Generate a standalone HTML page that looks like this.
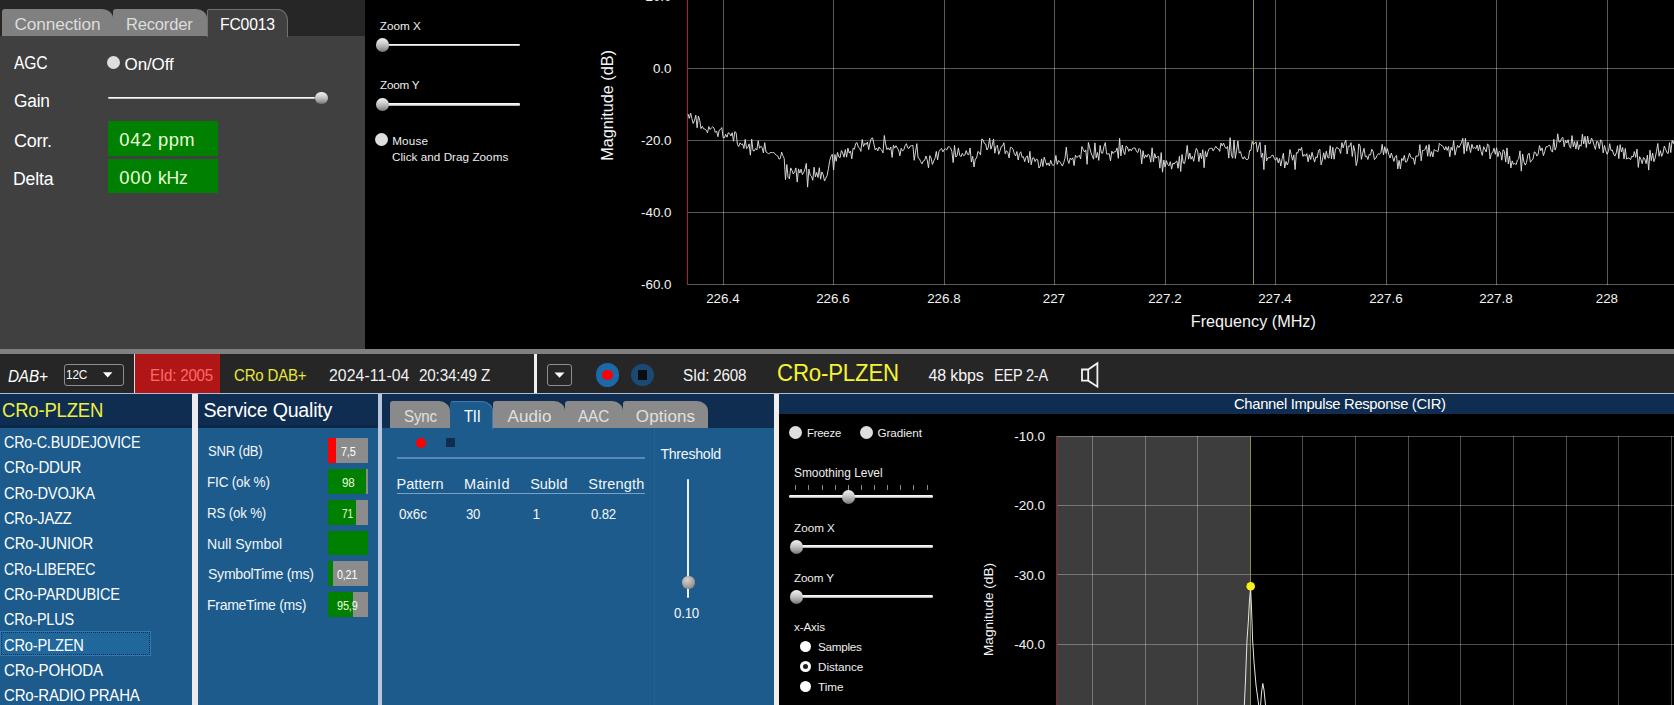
<!DOCTYPE html>
<html lang="en"><head><meta charset="utf-8"><title>DAB+ receiver</title>
<style>
html,body{margin:0;padding:0;background:#000;}
body{width:1674px;height:705px;position:relative;overflow:hidden;font-family:"Liberation Sans", sans-serif;}
.a,.t,.bar,.knob,.radio,.hl,.tab{position:absolute;}
.t{white-space:pre;display:block;transform-origin:0 0;}
.tab{background:#808080;top:9px;height:27px;border-radius:3px 11px 0 0/3px 9px 0 0;}
.tab.on{background:#404040;border:1px solid #727272;border-bottom:none;box-sizing:border-box;height:28px;border-radius:2px 10px 0 0/2px 11px 0 0;}
.tab2{position:absolute;background:#8a8a8a;top:401px;height:27px;border-radius:3px 11px 0 0/3px 10px 0 0;}
.tab2.on{background:#1c5b8b;box-sizing:border-box;border:1px solid #3c7cb2;border-bottom:none;border-left-color:#1c5b8b;}
.knob{width:13.2px;height:13.8px;border-radius:50%;background:linear-gradient(#f0f0f0 0%,#d2d2d2 35%,#a2a2a2 72%,#707070 100%);margin-left:0.4px;}
.radio{width:13px;height:13px;border-radius:50%;background:#dedede;}
.hl{height:2.4px;margin-top:0.4px;border-radius:1.2px;background:linear-gradient(#ffffff 0%,#f0f0f0 45%,#9c9c9c 100%);}
.bar{left:328px;width:39.9px;height:24.8px;background:#8c8c8c;}
.bar b{display:block;height:24.8px;}
.ticks i{position:absolute;top:485px;width:1px;height:5px;background:#8a8a8a;}
svg{position:absolute;left:0;top:0;}
svg text{font-family:"Liberation Sans", sans-serif;}
</style></head><body>
<!-- ===== top-left control panel ===== -->
<div class="a" style="left:0;top:0;width:365px;height:36px;background:#262626"></div>
<div class="a" style="left:0;top:36px;width:365px;height:313px;background:#404040"></div>
<div class="tab" style="left:1.5px;width:111px"></div>
<div class="tab" style="left:113px;width:94px"></div>
<div class="tab on" style="left:207px;width:81px"></div>
<div class="radio" style="left:107.3px;top:55.5px"></div>
<div class="hl" style="left:108px;top:96.3px;width:207px;height:2.4px"></div>
<div class="knob" style="left:314.8px;top:91.5px;width:12.4px;height:12.4px"></div>
<div class="a" style="left:107.8px;top:121px;width:110.2px;height:34.6px;background:#008000"></div>
<div class="a" style="left:107.8px;top:159.3px;width:110.2px;height:34px;background:#008000"></div>
<!-- zoom controls -->
<div class="hl" style="left:383px;top:43.2px;width:136.5px"></div>
<div class="knob" style="left:375.3px;top:38px"></div>
<div class="hl" style="left:383px;top:102.9px;width:136.5px"></div>
<div class="knob" style="left:375.3px;top:97.6px"></div>
<div class="radio" style="left:374.7px;top:133px"></div>
<!-- ===== divider + status bar ===== -->
<div class="a" style="left:0;top:349px;width:1674px;height:5px;background:#808080"></div>
<div class="a" style="left:0;top:354px;width:1674px;height:39px;background:#262626"></div>
<div class="a" style="left:0;top:393px;width:1674px;height:1px;background:#a9bdd6"></div>
<div class="a" style="left:64px;top:364px;width:59.7px;height:22px;box-sizing:border-box;border:1px solid #8e8e8e;border-radius:3px"></div>
<div class="a" style="left:133.5px;top:354px;width:1.5px;height:39px;background:#e0e0e0"></div>
<div class="a" style="left:135px;top:354px;width:84.7px;height:39px;background:#b01616"></div>
<div class="a" style="left:534px;top:354px;width:3px;height:39px;background:#f0f0f0"></div>
<div class="a" style="left:547.3px;top:364px;width:24.8px;height:22px;box-sizing:border-box;border:1px solid #8e8e8e;border-radius:3px"></div>
<div class="a" style="left:595.7px;top:363.2px;width:23.6px;height:23.6px;border-radius:50%;background:#1b69a6"></div>
<div class="a" style="left:602px;top:369.7px;width:10.6px;height:10.6px;border-radius:50%;background:#ff0000"></div>
<div class="a" style="left:631px;top:363.7px;width:22.6px;height:22.6px;border-radius:50%;background:#1a4a74"></div>
<div class="a" style="left:637.6px;top:370px;width:9.4px;height:10px;background:#0c0c0c"></div>
<!-- ===== bottom panels ===== -->
<div class="a" style="left:0;top:394px;width:192px;height:34px;background:#0f2d50"></div>
<div class="a" style="left:0;top:428px;width:192px;height:277px;background:#1c5b8b"></div>
<div class="a" style="left:0;top:425px;width:192px;height:3px;background:#0c2846"></div>
<div class="a" style="left:0;top:631.3px;width:150.5px;height:25px;box-sizing:border-box;background:#20689c;border:1px solid #3079b3"></div>
<div class="a" style="left:1px;top:632.3px;width:148.5px;height:23px;box-sizing:border-box;border:1px dotted #0f2d50"></div>
<div class="a" style="left:192.2px;top:394px;width:6px;height:311px;background:#ece9ef"></div>
<div class="a" style="left:198px;top:394px;width:180.3px;height:34px;background:#0f2d50"></div>
<div class="a" style="left:198px;top:428px;width:180.3px;height:277px;background:#1c5b8b"></div>
<div class="a" style="left:198px;top:425px;width:180.3px;height:3px;background:#0c2846"></div>
<div class="bar" style="top:438.2px"><b style="width:8px;background:#ff0000"></b></div><div class="bar" style="top:469.0px"><b style="width:38.4px;background:#008000"></b></div><div class="bar" style="top:499.8px"><b style="width:28px;background:#008000"></b></div><div class="bar" style="top:530.6px"><b style="width:40px;background:#008000"></b></div><div class="bar" style="top:561.4px"><b style="width:5px;background:#008000"></b></div><div class="bar" style="top:592.2px"><b style="width:25.2px;background:#008000"></b></div>
<div class="a" style="left:378.3px;top:394px;width:3.9px;height:311px;background:#b9c6dd"></div>
<div class="a" style="left:382.2px;top:394px;width:391.8px;height:34px;background:#0f2d50"></div>
<div class="a" style="left:382.2px;top:428px;width:391.8px;height:277px;background:#1c5b8b"></div>
<div class="tab2" style="left:390px;width:59.5px"></div>
<div class="tab2" style="left:493px;width:71.5px"></div>
<div class="tab2" style="left:564.5px;width:58.5px"></div>
<div class="tab2" style="left:622.5px;width:85.7px"></div>
<div class="tab2 on" style="left:450px;width:42.5px;height:28px"></div>
<div class="a" style="left:416.3px;top:438px;width:10px;height:10px;border-radius:50%;background:#ff0000"></div>
<div class="a" style="left:446px;top:438.2px;width:8.8px;height:9.3px;background:#0f2d50"></div>
<div class="a" style="left:397px;top:457.4px;width:247.6px;height:1.8px;background:#5a88b4"></div>
<div class="a" style="left:397px;top:493px;width:247.6px;height:1px;background:#7c9fc4"></div>
<div class="a" style="left:654px;top:428px;width:1px;height:277px;background:#24628f"></div>
<div class="a" style="left:686.6px;top:478.8px;width:2.6px;height:119.4px;border-radius:1.3px;background:#e8f0fa"></div>
<div class="knob" style="left:681.8px;top:576.3px;width:12.4px;height:12.4px;background:radial-gradient(circle at 40% 30%,#d8d0cc 0%,#aaa4a0 50%,#70706c 100%)"></div>
<div class="a" style="left:774px;top:394px;width:5px;height:311px;background:#f1eeee"></div>
<div class="a" style="left:779px;top:394px;width:895px;height:20px;background:#0f2d50"></div>
<!-- CIR controls -->
<div class="radio" style="left:789px;top:425.5px"></div>
<div class="radio" style="left:860.3px;top:425.5px"></div>
<div class="ticks"><i style="left:795.3px"></i><i style="left:808.4px"></i><i style="left:821.5px"></i><i style="left:834.7px"></i><i style="left:847.8px"></i><i style="left:860.9px"></i><i style="left:874.0px"></i><i style="left:887.1px"></i><i style="left:900.3px"></i><i style="left:913.4px"></i><i style="left:926.5px"></i></div>
<div class="hl" style="left:789.3px;top:495px;width:144px"></div>
<div class="knob" style="left:841.9px;top:490px"></div>
<div class="hl" style="left:796px;top:545.1px;width:137.4px"></div>
<div class="knob" style="left:789.5px;top:540.1px"></div>
<div class="hl" style="left:796px;top:594.8px;width:137.4px"></div>
<div class="knob" style="left:789.5px;top:589.8px"></div>
<div class="a" style="left:800.3px;top:641.2px;width:11px;height:11px;border-radius:50%;background:#fff"></div>
<div class="a" style="left:800.3px;top:661.1px;width:11px;height:11px;border-radius:50%;background:#fff"></div>
<div class="a" style="left:803.2px;top:664px;width:5.2px;height:5.2px;border-radius:50%;background:#1e1e1e"></div>
<div class="a" style="left:800.3px;top:681.2px;width:11px;height:11px;border-radius:50%;background:#fff"></div>
<!-- ===== charts + icons (svg) ===== -->
<svg width="1674" height="705" viewBox="0 0 1674 705">
 <g stroke="#fff" stroke-opacity="0.35" stroke-width="1" shape-rendering="crispEdges"><line x1="723.5" y1="0" x2="723.5" y2="284.5"/><line x1="833.5" y1="0" x2="833.5" y2="284.5"/><line x1="944.5" y1="0" x2="944.5" y2="284.5"/><line x1="1054.5" y1="0" x2="1054.5" y2="284.5"/><line x1="1165.5" y1="0" x2="1165.5" y2="284.5"/><line x1="1275.5" y1="0" x2="1275.5" y2="284.5"/><line x1="1386.5" y1="0" x2="1386.5" y2="284.5"/><line x1="1496.5" y1="0" x2="1496.5" y2="284.5"/><line x1="1607.5" y1="0" x2="1607.5" y2="284.5"/><line x1="688" y1="68.5" x2="1674" y2="68.5"/><line x1="688" y1="140.5" x2="1674" y2="140.5"/><line x1="688" y1="212.5" x2="1674" y2="212.5"/><line x1="688" y1="284.5" x2="1674" y2="284.5"/></g>
 <line x1="687.45" y1="0" x2="687.45" y2="285" stroke="#8e3030" stroke-width="1.2"/>
 <line x1="1253.5" y1="0" x2="1253.5" y2="285" stroke="#8e8e3a" stroke-width="1" shape-rendering="crispEdges"/>
 <polyline points="688.0,114.0 689.3,118.4 690.6,113.0 691.9,118.6 693.2,123.5 694.5,120.5 695.8,115.2 697.1,127.8 698.4,116.1 699.7,120.2 701.0,128.6 702.3,126.3 703.6,128.9 704.9,129.0 706.2,130.1 707.5,132.8 708.8,126.6 710.1,129.5 711.4,127.9 712.7,126.8 714.0,128.1 715.3,132.4 716.6,131.0 717.9,136.7 719.2,130.2 720.5,129.5 721.8,127.6 723.1,137.6 724.4,137.9 725.7,134.3 727.0,137.2 728.3,132.7 729.6,133.4 730.9,136.0 732.2,132.7 733.5,141.2 734.8,131.7 736.1,132.7 737.4,144.3 738.7,146.6 740.0,142.9 741.3,144.5 742.6,143.9 743.9,148.5 745.2,139.4 746.5,148.6 747.8,147.5 749.1,143.9 750.4,155.2 751.7,139.1 753.0,150.7 754.3,150.9 755.6,148.5 756.9,149.9 758.2,140.7 759.5,148.3 760.8,146.3 762.1,147.5 763.4,153.0 764.7,142.7 766.0,152.0 767.3,152.6 768.6,154.1 769.9,152.7 771.2,152.4 772.5,152.8 773.8,152.4 775.1,154.1 776.4,155.2 777.7,155.9 779.0,159.1 780.3,158.5 781.6,152.0 782.9,155.8 784.2,158.4 785.5,179.6 786.8,164.5 788.1,177.4 789.4,178.8 790.7,167.9 792.0,170.5 793.3,174.0 794.6,172.0 795.9,167.9 797.2,182.1 798.5,168.9 799.8,173.0 801.1,169.1 802.4,174.6 803.7,172.5 805.0,169.0 806.3,163.4 807.6,187.1 808.9,169.1 810.2,175.1 811.5,176.3 812.8,180.3 814.1,167.2 815.4,176.8 816.7,172.5 818.0,177.5 819.3,167.7 820.6,179.2 821.9,171.9 823.2,174.6 824.5,181.0 825.8,178.2 827.1,175.6 828.4,168.8 829.7,160.7 831.0,156.3 832.3,154.4 833.6,170.0 834.9,154.5 836.2,161.2 837.5,152.4 838.8,156.9 840.1,157.7 841.4,150.5 842.7,152.9 844.0,157.2 845.3,149.6 846.6,157.2 847.9,148.1 849.2,153.1 850.5,151.1 851.8,158.8 853.1,148.3 854.4,149.2 855.7,143.5 857.0,142.6 858.3,147.0 859.6,148.3 860.9,151.4 862.2,139.5 863.5,146.5 864.8,143.3 866.1,144.5 867.4,142.1 868.7,149.6 870.0,142.9 871.3,138.3 872.6,137.9 873.9,144.1 875.2,149.9 876.5,148.1 877.8,151.0 879.1,147.0 880.4,148.9 881.7,150.1 883.0,152.9 884.3,135.5 885.6,143.9 886.9,149.6 888.2,147.8 889.5,150.1 890.8,147.0 892.1,157.4 893.4,145.3 894.7,148.1 896.0,145.7 897.3,148.1 898.6,150.0 899.9,155.8 901.2,148.3 902.5,151.1 903.8,149.8 905.1,145.7 906.4,143.7 907.7,147.9 909.0,148.4 910.3,145.9 911.6,145.8 912.9,145.4 914.2,160.3 915.5,152.2 916.8,143.7 918.1,157.8 919.4,158.7 920.7,161.7 922.0,163.9 923.3,160.9 924.6,160.4 925.9,156.0 927.2,159.9 928.5,167.8 929.8,155.6 931.1,158.0 932.4,164.5 933.7,161.0 935.0,158.4 936.3,151.5 937.6,159.9 938.9,151.7 940.2,149.7 941.5,148.3 942.8,151.9 944.1,149.6 945.4,148.9 946.7,150.0 948.0,146.9 949.3,146.8 950.6,148.0 951.9,151.6 953.2,162.6 954.5,145.5 955.8,157.1 957.1,155.7 958.4,147.9 959.7,155.2 961.0,156.7 962.3,153.4 963.6,155.6 964.9,154.9 966.2,150.6 967.5,154.2 968.8,154.8 970.1,148.0 971.4,162.1 972.7,156.3 974.0,167.0 975.3,158.9 976.6,158.2 977.9,151.5 979.2,152.4 980.5,154.9 981.8,139.0 983.1,139.8 984.4,143.6 985.7,144.0 987.0,150.0 988.3,147.3 989.6,138.1 990.9,149.2 992.2,145.2 993.5,139.0 994.8,153.2 996.1,146.5 997.4,145.2 998.7,154.4 1000.0,150.8 1001.3,146.4 1002.6,145.9 1003.9,142.8 1005.2,153.8 1006.5,150.8 1007.8,152.5 1009.1,157.9 1010.4,147.4 1011.7,147.6 1013.0,149.1 1014.3,153.7 1015.6,155.9 1016.9,151.5 1018.2,160.0 1019.5,153.8 1020.8,151.8 1022.1,157.3 1023.4,156.7 1024.7,161.7 1026.0,157.3 1027.3,155.8 1028.6,162.8 1029.9,151.3 1031.2,164.7 1032.5,158.1 1033.8,157.8 1035.1,161.6 1036.4,159.0 1037.7,159.8 1039.0,168.0 1040.3,166.0 1041.6,158.8 1042.9,166.5 1044.2,157.2 1045.5,161.4 1046.8,165.2 1048.1,162.9 1049.4,165.9 1050.7,160.3 1052.0,164.5 1053.3,165.7 1054.6,163.6 1055.9,155.4 1057.2,164.4 1058.5,160.6 1059.8,161.6 1061.1,163.9 1062.4,166.1 1063.7,162.7 1065.0,158.3 1066.3,147.1 1067.6,159.9 1068.9,163.5 1070.2,158.0 1071.5,159.7 1072.8,157.8 1074.1,165.6 1075.4,155.1 1076.7,157.4 1078.0,156.7 1079.3,155.2 1080.6,158.9 1081.9,146.5 1083.2,149.5 1084.5,152.0 1085.8,149.9 1087.1,164.3 1088.4,142.5 1089.7,147.5 1091.0,152.9 1092.3,156.1 1093.6,159.2 1094.9,142.9 1096.2,157.9 1097.5,152.5 1098.8,160.4 1100.1,145.4 1101.4,153.0 1102.7,153.2 1104.0,146.3 1105.3,142.6 1106.6,153.9 1107.9,154.0 1109.2,153.7 1110.5,160.8 1111.8,151.1 1113.1,153.5 1114.4,151.7 1115.7,151.7 1117.0,147.9 1118.3,158.3 1119.6,138.3 1120.9,155.9 1122.2,145.1 1123.5,151.4 1124.8,154.5 1126.1,146.0 1127.4,147.0 1128.7,151.3 1130.0,148.9 1131.3,150.9 1132.6,148.4 1133.9,147.9 1135.2,148.1 1136.5,151.5 1137.8,152.6 1139.1,148.4 1140.4,149.7 1141.7,163.9 1143.0,150.7 1144.3,158.3 1145.6,154.9 1146.9,157.1 1148.2,154.2 1149.5,155.6 1150.8,162.2 1152.1,147.8 1153.4,161.7 1154.7,153.6 1156.0,158.2 1157.3,156.8 1158.6,156.4 1159.9,168.2 1161.2,152.6 1162.5,172.2 1163.8,160.1 1165.1,167.1 1166.4,160.6 1167.7,164.5 1169.0,165.8 1170.3,161.7 1171.6,169.1 1172.9,163.1 1174.2,164.1 1175.5,162.0 1176.8,161.0 1178.1,168.3 1179.4,156.3 1180.7,171.5 1182.0,154.5 1183.3,163.1 1184.6,163.4 1185.9,156.1 1187.2,145.4 1188.5,159.2 1189.8,153.0 1191.1,159.2 1192.4,156.3 1193.7,161.3 1195.0,153.5 1196.3,148.4 1197.6,150.8 1198.9,161.6 1200.2,153.0 1201.5,158.6 1202.8,149.7 1204.1,167.7 1205.4,151.4 1206.7,157.0 1208.0,151.6 1209.3,148.6 1210.6,148.4 1211.9,148.0 1213.2,150.9 1214.5,148.6 1215.8,146.3 1217.1,148.3 1218.4,148.9 1219.7,151.4 1221.0,143.0 1222.3,146.0 1223.6,143.1 1224.9,146.9 1226.2,148.6 1227.5,146.4 1228.8,158.1 1230.1,137.7 1231.4,155.2 1232.7,158.2 1234.0,140.0 1235.3,158.4 1236.6,150.4 1237.9,140.9 1239.2,153.2 1240.5,151.6 1241.8,156.6 1243.1,159.1 1244.4,156.6 1245.7,159.1 1247.0,159.6 1248.3,158.9 1249.6,150.5 1250.9,150.4 1252.2,141.4 1253.5,144.5 1254.8,143.3 1256.1,141.9 1257.4,152.1 1258.7,146.1 1260.0,142.3 1261.3,157.4 1262.6,153.0 1263.9,169.6 1265.2,145.0 1266.5,161.0 1267.8,158.0 1269.1,157.6 1270.4,157.6 1271.7,155.5 1273.0,155.2 1274.3,158.4 1275.6,160.3 1276.9,157.5 1278.2,162.8 1279.5,158.5 1280.8,166.1 1282.1,158.8 1283.4,153.3 1284.7,168.0 1286.0,161.5 1287.3,164.9 1288.6,161.4 1289.9,149.5 1291.2,154.4 1292.5,160.2 1293.8,154.9 1295.1,169.6 1296.4,152.7 1297.7,153.1 1299.0,148.8 1300.3,150.5 1301.6,147.4 1302.9,156.4 1304.2,154.4 1305.5,156.2 1306.8,153.6 1308.1,161.8 1309.4,154.7 1310.7,159.5 1312.0,152.3 1313.3,157.4 1314.6,162.1 1315.9,156.8 1317.2,157.8 1318.5,150.7 1319.8,149.1 1321.1,164.8 1322.4,159.9 1323.7,152.8 1325.0,159.4 1326.3,151.2 1327.6,157.3 1328.9,158.0 1330.2,145.6 1331.5,158.8 1332.8,147.3 1334.1,159.2 1335.4,149.9 1336.7,147.3 1338.0,148.3 1339.3,149.1 1340.6,153.5 1341.9,142.6 1343.2,147.9 1344.5,143.2 1345.8,140.0 1347.1,154.0 1348.4,146.0 1349.7,146.4 1351.0,142.7 1352.3,156.5 1353.6,145.6 1354.9,151.5 1356.2,165.6 1357.5,159.9 1358.8,143.9 1360.1,146.0 1361.4,159.4 1362.7,153.2 1364.0,148.3 1365.3,156.7 1366.6,156.1 1367.9,159.5 1369.2,154.5 1370.5,154.9 1371.8,149.3 1373.1,151.5 1374.4,159.6 1375.7,158.3 1377.0,155.6 1378.3,153.8 1379.6,154.2 1380.9,152.6 1382.2,144.3 1383.5,154.8 1384.8,146.7 1386.1,153.4 1387.4,148.6 1388.7,154.2 1390.0,158.0 1391.3,153.0 1392.6,157.1 1393.9,161.4 1395.2,156.7 1396.5,155.4 1397.8,168.9 1399.1,160.4 1400.4,168.9 1401.7,158.4 1403.0,160.6 1404.3,155.4 1405.6,162.1 1406.9,161.7 1408.2,157.7 1409.5,153.2 1410.8,157.2 1412.1,158.3 1413.4,158.1 1414.7,164.4 1416.0,155.9 1417.3,156.2 1418.6,155.7 1419.9,144.6 1421.2,160.8 1422.5,150.4 1423.8,150.4 1425.1,149.4 1426.4,145.6 1427.7,156.2 1429.0,144.5 1430.3,156.5 1431.6,151.6 1432.9,156.9 1434.2,149.4 1435.5,150.8 1436.8,150.9 1438.1,151.5 1439.4,143.4 1440.7,144.7 1442.0,145.8 1443.3,146.7 1444.6,150.0 1445.9,146.6 1447.2,150.4 1448.5,146.5 1449.8,156.7 1451.1,147.2 1452.4,150.4 1453.7,140.7 1455.0,155.1 1456.3,149.5 1457.6,145.4 1458.9,147.5 1460.2,145.4 1461.5,142.4 1462.8,138.3 1464.1,153.8 1465.4,138.3 1466.7,151.2 1468.0,142.1 1469.3,147.0 1470.6,152.5 1471.9,144.3 1473.2,148.5 1474.5,147.3 1475.8,148.8 1477.1,145.1 1478.4,150.9 1479.7,144.8 1481.0,151.3 1482.3,155.4 1483.6,146.7 1484.9,149.2 1486.2,152.0 1487.5,144.0 1488.8,145.2 1490.1,159.0 1491.4,153.2 1492.7,152.5 1494.0,148.2 1495.3,154.3 1496.6,147.8 1497.9,156.8 1499.2,151.3 1500.5,152.6 1501.8,160.2 1503.1,149.7 1504.4,151.4 1505.7,162.1 1507.0,147.9 1508.3,163.8 1509.6,156.1 1510.9,167.9 1512.2,160.9 1513.5,164.3 1514.8,163.4 1516.1,164.7 1517.4,160.1 1518.7,158.9 1520.0,150.9 1521.3,171.1 1522.6,154.0 1523.9,161.8 1525.2,165.1 1526.5,162.6 1527.8,155.0 1529.1,153.2 1530.4,162.2 1531.7,160.3 1533.0,159.2 1534.3,151.9 1535.6,152.6 1536.9,156.1 1538.2,154.0 1539.5,145.6 1540.8,150.7 1542.1,147.9 1543.4,155.6 1544.7,151.7 1546.0,146.7 1547.3,147.0 1548.6,145.4 1549.9,145.3 1551.2,150.7 1552.5,152.1 1553.8,139.4 1555.1,150.1 1556.4,146.5 1557.7,133.8 1559.0,142.0 1560.3,141.8 1561.6,138.3 1562.9,137.4 1564.2,146.8 1565.5,140.3 1566.8,143.0 1568.1,139.7 1569.4,146.2 1570.7,148.2 1572.0,135.6 1573.3,146.8 1574.6,141.7 1575.9,149.1 1577.2,141.3 1578.5,149.6 1579.8,144.8 1581.1,146.2 1582.4,134.2 1583.7,144.0 1585.0,136.3 1586.3,147.6 1587.6,136.1 1588.9,143.8 1590.2,143.5 1591.5,138.0 1592.8,140.8 1594.1,145.4 1595.4,149.4 1596.7,141.4 1598.0,141.9 1599.3,148.7 1600.6,139.9 1601.9,141.1 1603.2,152.9 1604.5,145.5 1605.8,150.6 1607.1,154.3 1608.4,151.5 1609.7,143.7 1611.0,150.5 1612.3,150.0 1613.6,154.0 1614.9,156.1 1616.2,153.0 1617.5,145.7 1618.8,158.6 1620.1,144.7 1621.4,151.9 1622.7,147.5 1624.0,159.0 1625.3,148.5 1626.6,159.2 1627.9,157.9 1629.2,158.2 1630.5,159.7 1631.8,156.2 1633.1,157.0 1634.4,151.6 1635.7,157.4 1637.0,149.1 1638.3,167.4 1639.6,156.7 1640.9,159.5 1642.2,163.6 1643.5,157.4 1644.8,159.2 1646.1,163.7 1647.4,155.1 1648.7,170.1 1650.0,150.2 1651.3,160.7 1652.6,153.0 1653.9,161.7 1655.2,157.9 1656.5,151.4 1657.8,143.5 1659.1,156.3 1660.4,150.6 1661.7,156.4 1663.0,153.0 1664.3,146.0 1665.6,149.3 1666.9,152.7 1668.2,153.5 1669.5,142.6 1670.8,152.6 1672.1,140.3 1673.4,143.6 1674.7,138.4" fill="none" stroke="#dedede" stroke-width="0.95" stroke-linejoin="round"/>
 <g fill="#f2f2f2" font-size="13.4"><text x="722.9" y="303" text-anchor="middle">226.4</text><text x="832.9" y="303" text-anchor="middle">226.6</text><text x="943.9" y="303" text-anchor="middle">226.8</text><text x="1053.9" y="303" text-anchor="middle">227</text><text x="1164.9" y="303" text-anchor="middle">227.2</text><text x="1274.9" y="303" text-anchor="middle">227.4</text><text x="1385.9" y="303" text-anchor="middle">227.6</text><text x="1495.9" y="303" text-anchor="middle">227.8</text><text x="1606.9" y="303" text-anchor="middle">228</text><text x="671.5" y="1.4" text-anchor="end">20.0</text><text x="671.5" y="73.4" text-anchor="end">0.0</text><text x="671.5" y="145.4" text-anchor="end">-20.0</text><text x="671.5" y="217.4" text-anchor="end">-40.0</text><text x="671.5" y="289.3" text-anchor="end">-60.0</text></g>
 <text x="1253.3" y="326.5" text-anchor="middle" font-size="16.2" fill="#f4f4f4">Frequency (MHz)</text>
 <text transform="translate(612.9,105.5) rotate(-90)" text-anchor="middle" font-size="16.2" fill="#f4f4f4">Magnitude (dB)</text>
 <!-- CIR -->
 <rect x="1057" y="436" width="193.5" height="269" fill="#3d3d3d"/>
 <g stroke="#fff" stroke-opacity="0.3" stroke-width="1" shape-rendering="crispEdges"><line x1="1092.5" y1="436" x2="1092.5" y2="705"/><line x1="1145.5" y1="436" x2="1145.5" y2="705"/><line x1="1197.5" y1="436" x2="1197.5" y2="705"/><line x1="1302.5" y1="436" x2="1302.5" y2="705"/><line x1="1355.5" y1="436" x2="1355.5" y2="705"/><line x1="1408.5" y1="436" x2="1408.5" y2="705"/><line x1="1460.5" y1="436" x2="1460.5" y2="705"/><line x1="1513.5" y1="436" x2="1513.5" y2="705"/><line x1="1566.5" y1="436" x2="1566.5" y2="705"/><line x1="1618.5" y1="436" x2="1618.5" y2="705"/><line x1="1671.5" y1="436" x2="1671.5" y2="705"/><line x1="1057" y1="436.5" x2="1674" y2="436.5"/><line x1="1057" y1="505.5" x2="1674" y2="505.5"/><line x1="1057" y1="574.8" x2="1674" y2="574.8"/><line x1="1057" y1="644.2" x2="1674" y2="644.2"/></g>
 <line x1="1056.8" y1="436" x2="1056.8" y2="705" stroke="#8e3434" stroke-width="1.2"/>
 <line x1="1250.5" y1="436" x2="1250.5" y2="705" stroke="#8c8c4c" stroke-width="1" shape-rendering="crispEdges"/>
 <polyline points="1244.3,706 1245.5,680 1247,640 1248.3,622 1249.5,600 1250.6,588 1251.6,610 1252.6,640 1254,662 1256,685 1258.8,706" fill="none" stroke="#e6e6e6" stroke-width="1"/>
 <polyline points="1260.5,706 1261.6,692 1262.8,683.5 1264,690 1265.6,706" fill="none" stroke="#e6e6e6" stroke-width="1"/>
 <circle cx="1250.7" cy="586.3" r="4.3" fill="#f6f01a"/>
 <g fill="#f2f2f2" font-size="13.5"><text x="1045" y="441.1" text-anchor="end">-10.0</text><text x="1045" y="510.2" text-anchor="end">-20.0</text><text x="1045" y="579.5" text-anchor="end">-30.0</text><text x="1045" y="648.9" text-anchor="end">-40.0</text></g>
 <text transform="translate(992.8,609.5) rotate(-90)" text-anchor="middle" font-size="13.6" fill="#f4f4f4">Magnitude (dB)</text>
 <!-- icons -->
 <path d="M103 372.2h9.4l-4.7 5.2z" fill="#fff"/>
 <path d="M554.5 372.4h10l-5 5.3z" fill="#fff"/>
 <path d="M1082 369.5h6.2l9.2-6.2v23.4l-9.2-6h-6.2z M1088.2 369.5v11.2" fill="none" stroke="#f2f2f2" stroke-width="1.8" stroke-linejoin="miter"/>
</svg>
<!-- ===== text ===== -->
<span class="t" style="left:14.50px;top:16px;font-size:17.3px;line-height:17px;color:#dcdcdc;letter-spacing:-0.146px;">Connection</span>
<span class="t" style="left:126.04px;top:16px;font-size:17.3px;line-height:17px;color:#dcdcdc;letter-spacing:-0.200px;transform:scaleX(0.9576);">Recorder</span>
<span class="t" style="left:219.59px;top:16px;font-size:17.3px;line-height:17px;color:#fff;letter-spacing:-0.200px;transform:scaleX(0.9105);">FC0013</span>
<span class="t" style="left:14.00px;top:54px;font-size:18px;line-height:18px;color:#fff;letter-spacing:-0.200px;transform:scaleX(0.8703);">AGC</span>
<span class="t" style="left:124.60px;top:56px;font-size:17px;line-height:17px;color:#fff;letter-spacing:-0.128px;">On/Off</span>
<span class="t" style="left:14.00px;top:92px;font-size:18px;line-height:18px;color:#fff;letter-spacing:-0.200px;transform:scaleX(0.9613);">Gain</span>
<span class="t" style="left:14.00px;top:132px;font-size:18px;line-height:18px;color:#fff;letter-spacing:-0.251px;">Corr.</span>
<span class="t" style="left:13.02px;top:170px;font-size:18px;line-height:18px;color:#fff;letter-spacing:-0.200px;transform:scaleX(0.9828);">Delta</span>
<span class="val"><span class="t" style="left:119.30px;top:131px;font-size:18.4px;line-height:18px;color:#eaffd8;letter-spacing:0.722px;">042</span> <span class="t" style="left:158.00px;top:131px;font-size:18.4px;line-height:18px;color:#eaffd8;letter-spacing:0.422px;">ppm</span></span>
<span class="val"><span class="t" style="left:119.30px;top:169px;font-size:18.4px;line-height:18px;color:#eaffd8;letter-spacing:0.722px;">000</span> <span class="t" style="left:158.05px;top:169px;font-size:18.4px;line-height:18px;color:#eaffd8;letter-spacing:-0.200px;transform:scaleX(0.9542);">kHz</span></span>
<span class="t" style="left:379.80px;top:20px;font-size:11.7px;line-height:12px;color:#eee;">Zoom X</span>
<span class="t" style="left:380.00px;top:79px;font-size:11.7px;line-height:12px;color:#eee;letter-spacing:-0.224px;">Zoom Y</span>
<span class="t" style="left:392.20px;top:135px;font-size:11.7px;line-height:12px;color:#eee;letter-spacing:0.155px;">Mouse</span>
<span class="t" style="left:392.00px;top:151px;font-size:11.7px;line-height:12px;color:#eee;letter-spacing:0.033px;">Click and Drag Zooms</span>
<span class="t" style="left:8.20px;top:368px;font-size:16.3px;line-height:16px;color:#fff;letter-spacing:-0.200px;transform:scaleX(0.9409);font-style:italic;">DAB+</span>
<span class="t" style="left:65.91px;top:368px;font-size:13.2px;line-height:13px;color:#fff;letter-spacing:-0.200px;transform:scaleX(0.8939);">12C</span>
<span class="t" style="left:150.04px;top:368px;font-size:15.8px;line-height:16px;color:#ff6a6a;letter-spacing:-0.200px;transform:scaleX(0.9579);">EId: 2005</span>
<span class="t" style="left:234.40px;top:368px;font-size:15.8px;line-height:16px;color:#e8e83c;letter-spacing:-0.200px;transform:scaleX(0.9517);">CRo DAB+</span>
<span class="t" style="left:329.00px;top:368px;font-size:15.8px;line-height:16px;color:#f0f0f0;letter-spacing:0.084px;">2024-11-04</span>
<span class="t" style="left:419.40px;top:368px;font-size:15.8px;line-height:16px;color:#f0f0f0;letter-spacing:-0.200px;transform:scaleX(0.9665);">20:34:49 Z</span>
<span class="t" style="left:682.90px;top:368px;font-size:16px;line-height:16px;color:#f4f4f4;letter-spacing:-0.200px;transform:scaleX(0.9492);">SId: 2608</span>
<span class="t" style="left:776.65px;top:362px;font-size:23.4px;line-height:23px;color:#f4f432;letter-spacing:-0.200px;transform:scaleX(0.9515);">CRo-PLZEN</span>
<span class="t" style="left:928.40px;top:368px;font-size:16px;line-height:16px;color:#f4f4f4;letter-spacing:-0.123px;">48 kbps</span>
<span class="t" style="left:993.50px;top:368px;font-size:16px;line-height:16px;color:#f4f4f4;letter-spacing:-0.200px;transform:scaleX(0.9044);">EEP 2-A</span>
<span class="t" style="left:2.26px;top:400px;font-size:19.6px;line-height:20px;color:#f0f03c;letter-spacing:-0.200px;transform:scaleX(0.9446);">CRo-PLZEN</span>
<span class="t" style="left:4.00px;top:435px;font-size:15.8px;line-height:16px;color:#fff;letter-spacing:-0.200px;transform:scaleX(0.9063);">CRo-C.BUDEJOVICE</span>
<span class="t" style="left:4.00px;top:460px;font-size:15.8px;line-height:16px;color:#fff;letter-spacing:-0.200px;transform:scaleX(0.9543);">CRo-DDUR</span>
<span class="t" style="left:4.00px;top:486px;font-size:15.8px;line-height:16px;color:#fff;letter-spacing:-0.200px;transform:scaleX(0.9268);">CRo-DVOJKA</span>
<span class="t" style="left:4.00px;top:511px;font-size:15.8px;line-height:16px;color:#fff;letter-spacing:-0.200px;transform:scaleX(0.9246);">CRo-JAZZ</span>
<span class="t" style="left:4.00px;top:536px;font-size:15.8px;line-height:16px;color:#fff;letter-spacing:-0.200px;transform:scaleX(0.9524);">CRo-JUNIOR</span>
<span class="t" style="left:4.00px;top:562px;font-size:15.8px;line-height:16px;color:#fff;letter-spacing:-0.200px;transform:scaleX(0.8917);">CRo-LIBEREC</span>
<span class="t" style="left:4.00px;top:587px;font-size:15.8px;line-height:16px;color:#fff;letter-spacing:-0.200px;transform:scaleX(0.9246);">CRo-PARDUBICE</span>
<span class="t" style="left:4.00px;top:612px;font-size:15.8px;line-height:16px;color:#fff;letter-spacing:-0.200px;transform:scaleX(0.9122);">CRo-PLUS</span>
<span class="t" style="left:4.00px;top:638px;font-size:15.8px;line-height:16px;color:#fff;letter-spacing:-0.200px;transform:scaleX(0.9269);">CRo-PLZEN</span>
<span class="t" style="left:4.00px;top:663px;font-size:15.8px;line-height:16px;color:#fff;letter-spacing:-0.200px;transform:scaleX(0.9568);">CRo-POHODA</span>
<span class="t" style="left:4.00px;top:688px;font-size:15.8px;line-height:16px;color:#fff;letter-spacing:-0.200px;transform:scaleX(0.9507);">CRo-RADIO PRAHA</span>
<span class="t" style="left:203.50px;top:400px;font-size:19.6px;line-height:20px;color:#fff;letter-spacing:-0.205px;">Service Quality</span>
<span class="t" style="left:208.00px;top:444px;font-size:14.1px;line-height:14px;color:#f2f6fa;letter-spacing:-0.200px;transform:scaleX(0.9278);">SNR (dB)</span>
<span class="t" style="left:207.04px;top:475px;font-size:14.1px;line-height:14px;color:#f2f6fa;letter-spacing:-0.200px;transform:scaleX(0.9601);">FIC (ok %)</span>
<span class="t" style="left:207.05px;top:506px;font-size:14.1px;line-height:14px;color:#f2f6fa;letter-spacing:-0.200px;transform:scaleX(0.9471);">RS (ok %)</span>
<span class="t" style="left:207.00px;top:537px;font-size:14.1px;line-height:14px;color:#f2f6fa;">Null Symbol</span>
<span class="t" style="left:208.00px;top:567px;font-size:14.1px;line-height:14px;color:#f2f6fa;letter-spacing:-0.278px;">SymbolTime (ms)</span>
<span class="t" style="left:207.00px;top:598px;font-size:14.1px;line-height:14px;color:#f2f6fa;letter-spacing:-0.324px;">FrameTime (ms)</span>
<span class="t" style="left:340.50px;top:446px;font-size:12px;line-height:12px;color:#fff;letter-spacing:-0.200px;transform:scaleX(0.9032);">7,5</span>
<span class="t" style="left:341.50px;top:477px;font-size:12px;line-height:12px;color:#eaffd8;letter-spacing:-0.200px;transform:scaleX(0.9648);">98</span>
<span class="t" style="left:341.80px;top:508px;font-size:12px;line-height:12px;color:#eaffd8;letter-spacing:-0.200px;transform:scaleX(0.8312);">71</span>
<span class="t" style="left:337.00px;top:569px;font-size:12px;line-height:12px;color:#fff;letter-spacing:-0.200px;transform:scaleX(0.8968);">0,21</span>
<span class="t" style="left:337.00px;top:600px;font-size:12px;line-height:12px;color:#eaffd8;letter-spacing:-0.200px;transform:scaleX(0.9098);">95,9</span>
<span class="t" style="left:403.50px;top:408px;font-size:17px;line-height:17px;color:#e0e0e0;letter-spacing:-0.200px;transform:scaleX(0.8887);">Sync</span>
<span class="t" style="left:463.80px;top:408px;font-size:17px;line-height:17px;color:#fff;letter-spacing:-0.200px;transform:scaleX(0.8660);">TII</span>
<span class="t" style="left:507.50px;top:408px;font-size:17px;line-height:17px;color:#e0e0e0;letter-spacing:0.119px;">Audio</span>
<span class="t" style="left:578.00px;top:408px;font-size:17px;line-height:17px;color:#e0e0e0;letter-spacing:-0.200px;transform:scaleX(0.9044);">AAC</span>
<span class="t" style="left:635.80px;top:408px;font-size:17px;line-height:17px;color:#e0e0e0;letter-spacing:0.119px;">Options</span>
<span class="t" style="left:396.40px;top:477px;font-size:14.5px;line-height:14px;color:#f2f6fa;letter-spacing:0.086px;">Pattern</span>
<span class="t" style="left:463.90px;top:477px;font-size:14.5px;line-height:14px;color:#f2f6fa;letter-spacing:0.449px;">MainId</span>
<span class="t" style="left:530.30px;top:477px;font-size:14.5px;line-height:14px;color:#f2f6fa;letter-spacing:-0.157px;">SubId</span>
<span class="t" style="left:588.30px;top:477px;font-size:14.5px;line-height:14px;color:#f2f6fa;letter-spacing:0.179px;">Strength</span>
<span class="t" style="left:398.60px;top:508px;font-size:13.8px;line-height:14px;color:#f2f6fa;letter-spacing:-0.200px;transform:scaleX(0.9775);">0x6c</span>
<span class="t" style="left:466.30px;top:508px;font-size:13.8px;line-height:14px;color:#f2f6fa;letter-spacing:-0.200px;transform:scaleX(0.9500);">30</span>
<span class="t" style="left:532.40px;top:508px;font-size:13.8px;line-height:14px;color:#f2f6fa;">1</span>
<span class="t" style="left:590.50px;top:508px;font-size:13.8px;line-height:14px;color:#f2f6fa;letter-spacing:-0.200px;transform:scaleX(0.9578);">0.82</span>
<span class="t" style="left:660.40px;top:447px;font-size:14.2px;line-height:14px;color:#f2f6fa;letter-spacing:-0.287px;">Threshold</span>
<span class="t" style="left:673.80px;top:607px;font-size:13.8px;line-height:14px;color:#f2f6fa;letter-spacing:-0.200px;transform:scaleX(0.9594);">0.10</span>
<span class="t" style="left:1234.00px;top:397px;font-size:14.8px;line-height:15px;color:#fff;letter-spacing:-0.321px;">Channel Impulse Response (CIR)</span>
<span class="t" style="left:806.50px;top:427px;font-size:11.7px;line-height:12px;color:#eee;letter-spacing:-0.200px;transform:scaleX(0.9663);">Freeze</span>
<span class="t" style="left:877.50px;top:427px;font-size:11.7px;line-height:12px;color:#eee;letter-spacing:-0.054px;">Gradient</span>
<span class="t" style="left:794.00px;top:467px;font-size:11.9px;line-height:12px;color:#eee;">Smoothing Level</span>
<span class="t" style="left:794.00px;top:522px;font-size:11.7px;line-height:12px;color:#eee;">Zoom X</span>
<span class="t" style="left:794.00px;top:572px;font-size:11.7px;line-height:12px;color:#eee;letter-spacing:-0.144px;">Zoom Y</span>
<span class="t" style="left:794.00px;top:621px;font-size:11.7px;line-height:12px;color:#eee;letter-spacing:-0.154px;">x-Axis</span>
<span class="t" style="left:818.00px;top:641px;font-size:11.7px;line-height:12px;color:#eee;letter-spacing:-0.271px;">Samples</span>
<span class="t" style="left:818.00px;top:661px;font-size:11.7px;line-height:12px;color:#eee;letter-spacing:-0.039px;">Distance</span>
<span class="t" style="left:818.00px;top:681px;font-size:11.7px;line-height:12px;color:#eee;">Time</span>
</body></html>
